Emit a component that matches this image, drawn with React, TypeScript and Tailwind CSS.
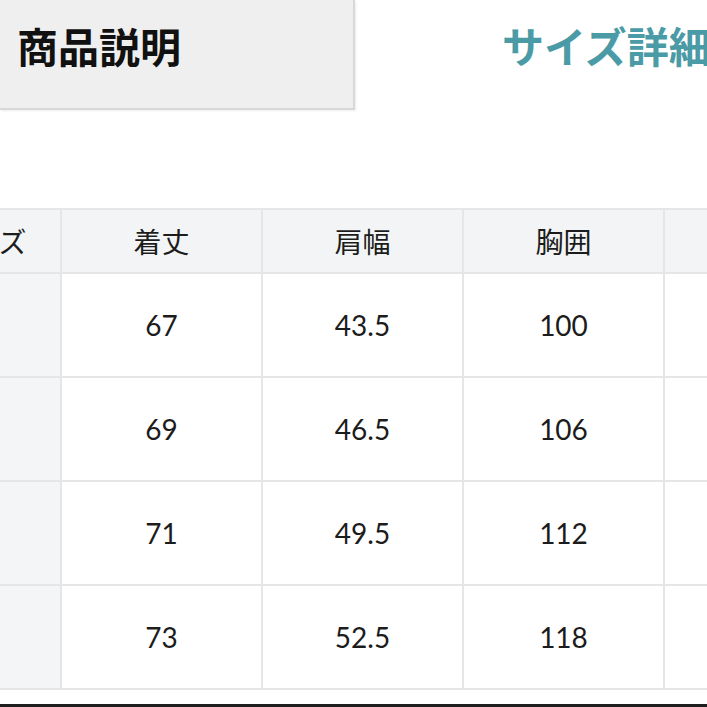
const HEAD = ["着丈", "肩幅", "胸囲", ""];
const ROWS = [
  ["67", "43.5", "100", ""],
  ["69", "46.5", "106", ""],
  ["71", "49.5", "112", ""],
  ["73", "52.5", "118", ""],
];

const jp = "font-['Noto_Sans_CJK_JP','Noto_Sans',sans-serif]";
const num = "font-['Lato','Noto_Sans',sans-serif]";

export default function App() {
  return (
    <div className="w-[707px] h-[707px] overflow-hidden bg-white flex flex-col text-[#1c1c1c]">
      <div className="flex items-start h-[110px] shrink-0">
        <div className="w-[355px] h-[110px] shrink-0 bg-[#efefef] border-r-2 border-b-2 border-[#d8d8d8] shadow-[1px_1px_2px_rgba(0,0,0,0.08)] pl-[17px] pt-[21px]">
          <span className={`${jp} text-[41px] leading-[48px] font-bold text-[#111]`}>商品説明</span>
        </div>
        <div className={`${jp} pl-[147px] pt-[21px] text-[42px] leading-[48px] font-bold text-[#4b9ba6] whitespace-nowrap`}>
          サイズ詳細
        </div>
      </div>

      <div className="mt-[98px] overflow-hidden">
        <div className="ml-[-90px] w-[1010px] grid grid-cols-[150px_199px_199px_199px_199px] gap-x-[2px] gap-y-[2px] bg-[#e6e6e6] py-[2px]">
          <div className={`${jp} bg-[#f2f4f5] h-[62px] flex items-center justify-center text-[28px]`}>サイズ</div>
          {HEAD.map((h, i) => (
            <div key={i} className={`${jp} bg-[#f2f4f5] h-[62px] flex items-center justify-center text-[28px]`}>
              {h}
            </div>
          ))}
          {ROWS.map((r, ri) => (
            <>
              <div key={`l${ri}`} className="bg-[#f3f5f6] h-[102px]" />
              {r.map((c, ci) => (
                <div key={`${ri}-${ci}`} className={`${num} bg-white h-[102px] flex items-center justify-center text-[28px]`}>
                  {c}
                </div>
              ))}
            </>
          ))}
        </div>
      </div>

      <div className="mt-auto h-[3px] bg-[#1e1e1e]" />
    </div>
  );
}
